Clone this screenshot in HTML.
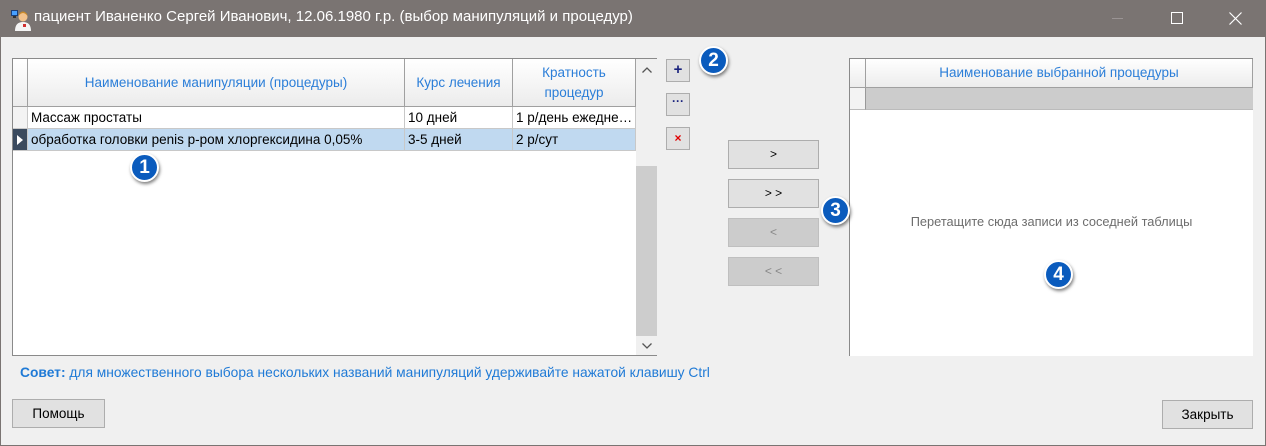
<!DOCTYPE html>
<html><head><meta charset="utf-8"><style>
*{margin:0;padding:0;box-sizing:border-box}
body{width:1266px;height:446px;background:#f0f0f0;font-family:"Segoe UI","Liberation Sans","DejaVu Sans",sans-serif;font-size:13.5px;position:relative;overflow:hidden;border:1px solid #7a7472;border-top:none}
.a{position:absolute}
.title{left:0;top:0;width:1266px;height:37px;background:#7a7472;color:#fff;font-size:15px}
.grid{background:#fff;border:1px solid #8a8a8a}
.hd{background:linear-gradient(#fff,#ececec);border-right:1px solid #a0a0a0;border-bottom:1px solid #a0a0a0;color:#2b7ed8;text-align:center;display:flex;align-items:center;justify-content:center;line-height:20px;font-size:13.5px}
.cell{border-right:1px solid #c8c8c8;border-bottom:1px solid #c8c8c8;padding-left:3px;line-height:21px;white-space:nowrap;overflow:hidden}
.btn{background:#e1e1e1;border:1px solid #adadad;text-align:center;font-size:12px}
.dis{background:#cccccc;border-color:#bfbfbf;color:#888}
.badge{width:29px;height:29px;border-radius:50%;background:#0a5bbd;border:2px solid #fff;box-shadow:1px 2px 3px rgba(0,0,0,.5);color:#fff;font-weight:bold;font-size:19px;text-align:center;line-height:25px;font-family:"Liberation Sans",sans-serif}
</style></head><body>
<div class="a title">
 <svg class="a" style="left:9px;top:9px" width="22" height="22" viewBox="0 0 22 22"><rect x="1" y="1" width="7" height="6" fill="#1b3f7a"/><rect x="2" y="2" width="5" height="4" fill="#48a0ff"/><rect x="3" y="7" width="3" height="2" fill="#333"/><circle cx="13" cy="8" r="4.5" fill="#f2c28c"/><path d="M8.5 7 Q13 1 17.5 7 L17 5 Q13 0 9 5Z" fill="#c98a2a"/><path d="M5 22 Q5 13 13 13 Q21 13 21 22Z" fill="#f4f4f4"/><rect x="13" y="15" width="3" height="3" fill="#d03030"/></svg>
 <div class="a" style="left:33px;top:8px;">пациент Иваненко Сергей Иванович, 12.06.1980 г.р. (выбор манипуляций и процедур)</div>
 <div class="a" style="left:1111px;top:18px;width:11px;height:1px;background:#9a9494"></div>
 <div class="a" style="left:1170px;top:12px;width:12px;height:12px;border:1px solid #fff"></div>
 <svg class="a" style="left:1228px;top:12px" width="13" height="13"><path d="M0.5 0.5L12.5 12.5M12.5 0.5L0.5 12.5" stroke="#fff" stroke-width="1.2"/></svg>
</div>

<div class="a grid" style="left:11px;top:58px;width:645px;height:298px">
 <div class="a hd" style="left:0;top:0;width:15px;height:48px"></div>
 <div class="a hd" style="left:15px;top:0;width:377px;height:48px">Наименование манипуляции (процедуры)</div>
 <div class="a hd" style="left:392px;top:0;width:108px;height:48px">Курс лечения</div>
 <div class="a hd" style="left:500px;top:0;width:123px;height:48px">Кратность<br>процедур</div>
 <div class="a cell" style="left:0;top:48px;width:15px;height:22px;background:#f3f3f3"></div>
 <div class="a cell" style="left:15px;top:48px;width:377px;height:22px">Массаж простаты</div>
 <div class="a cell" style="left:392px;top:48px;width:108px;height:22px">10 дней</div>
 <div class="a cell" style="left:500px;top:48px;width:123px;height:22px">1 р/день ежедне…</div>
 <div class="a cell" style="left:0;top:70px;width:15px;height:22px;background:#3a4a5e"><svg style="position:absolute;left:4px;top:6px" width="6" height="10"><path d="M0 0L6 5L0 10Z" fill="#fff"/></svg></div>
 <div class="a cell" style="left:15px;top:70px;width:377px;height:22px;background:#c0d9f0">обработка головки penis р-ром хлоргексидина 0,05%</div>
 <div class="a cell" style="left:392px;top:70px;width:108px;height:22px;background:#c0d9f0">3-5 дней</div>
 <div class="a cell" style="left:500px;top:70px;width:123px;height:22px;background:#c0d9f0">2 р/сут</div>
 <div class="a" style="left:623px;top:0;width:21px;height:296px;background:#f0f0f0"></div>
 <div class="a" style="left:623px;top:107px;width:21px;height:170px;background:#cdcdcd"></div>
 <svg class="a" style="left:629px;top:8px" width="10" height="6"><path d="M0.5 5.5L5 1L9.5 5.5" stroke="#555" fill="none" stroke-width="1.3"/></svg>
 <svg class="a" style="left:629px;top:284px" width="10" height="6"><path d="M0.5 0.5L5 5L9.5 0.5" stroke="#555" fill="none" stroke-width="1.3"/></svg>
</div>

<div class="a btn" style="left:665px;top:59px;width:24px;height:23px;color:#1a237e;font-weight:bold;font-size:15px;line-height:20px">+</div>
<div class="a btn" style="left:665px;top:93px;width:24px;height:23px;color:#1a237e;font-weight:bold;line-height:14px">···</div>
<div class="a btn" style="left:665px;top:127px;width:24px;height:23px;color:#e00000;font-weight:bold;line-height:20px">×</div>

<div class="a btn" style="left:727px;top:140px;width:91px;height:29px;line-height:27px">&gt;</div>
<div class="a btn" style="left:727px;top:179px;width:91px;height:29px;line-height:27px">&gt; &gt;</div>
<div class="a btn dis" style="left:727px;top:218px;width:91px;height:29px;line-height:27px">&lt;</div>
<div class="a btn dis" style="left:727px;top:257px;width:91px;height:29px;line-height:27px">&lt; &lt;</div>

<div class="a grid" style="left:848px;top:58px;width:404px;height:298px;border-bottom:none;border-right:none">
 <div class="a hd" style="left:0;top:0;width:16px;height:29px"></div>
 <div class="a hd" style="left:16px;top:0;width:387px;height:29px">Наименование выбранной процедуры</div>
 <div class="a" style="left:0;top:29px;width:16px;height:22px;background:#f3f3f3;border-right:1px solid #999;border-bottom:1px solid #bbb"></div>
 <div class="a" style="left:16px;top:29px;width:387px;height:22px;background:#cccccc;border-bottom:1px solid #bbb"></div>
 <div class="a" style="left:0;top:155px;width:403px;text-align:center;color:#6d6d6d;font-size:12.8px">Перетащите сюда записи из соседней таблицы</div>
</div>

<div class="a" style="left:19px;top:365px;color:#1f7ad6;font-size:13.8px"><b>Совет:</b> для множественного выбора нескольких названий манипуляций удерживайте нажатой клавишу Ctrl</div>
<div class="a btn" style="left:11px;top:399px;width:93px;height:29px;line-height:27px;font-size:13.5px">Помощь</div>
<div class="a btn" style="left:1161px;top:400px;width:91px;height:29px;line-height:27px;font-size:13.5px">Закрыть</div>

<div class="a badge" style="left:129px;top:153px">1</div>
<div class="a badge" style="left:698px;top:46px">2</div>
<div class="a badge" style="left:820px;top:196px">3</div>
<div class="a badge" style="left:1043px;top:260px">4</div>
</body></html>
